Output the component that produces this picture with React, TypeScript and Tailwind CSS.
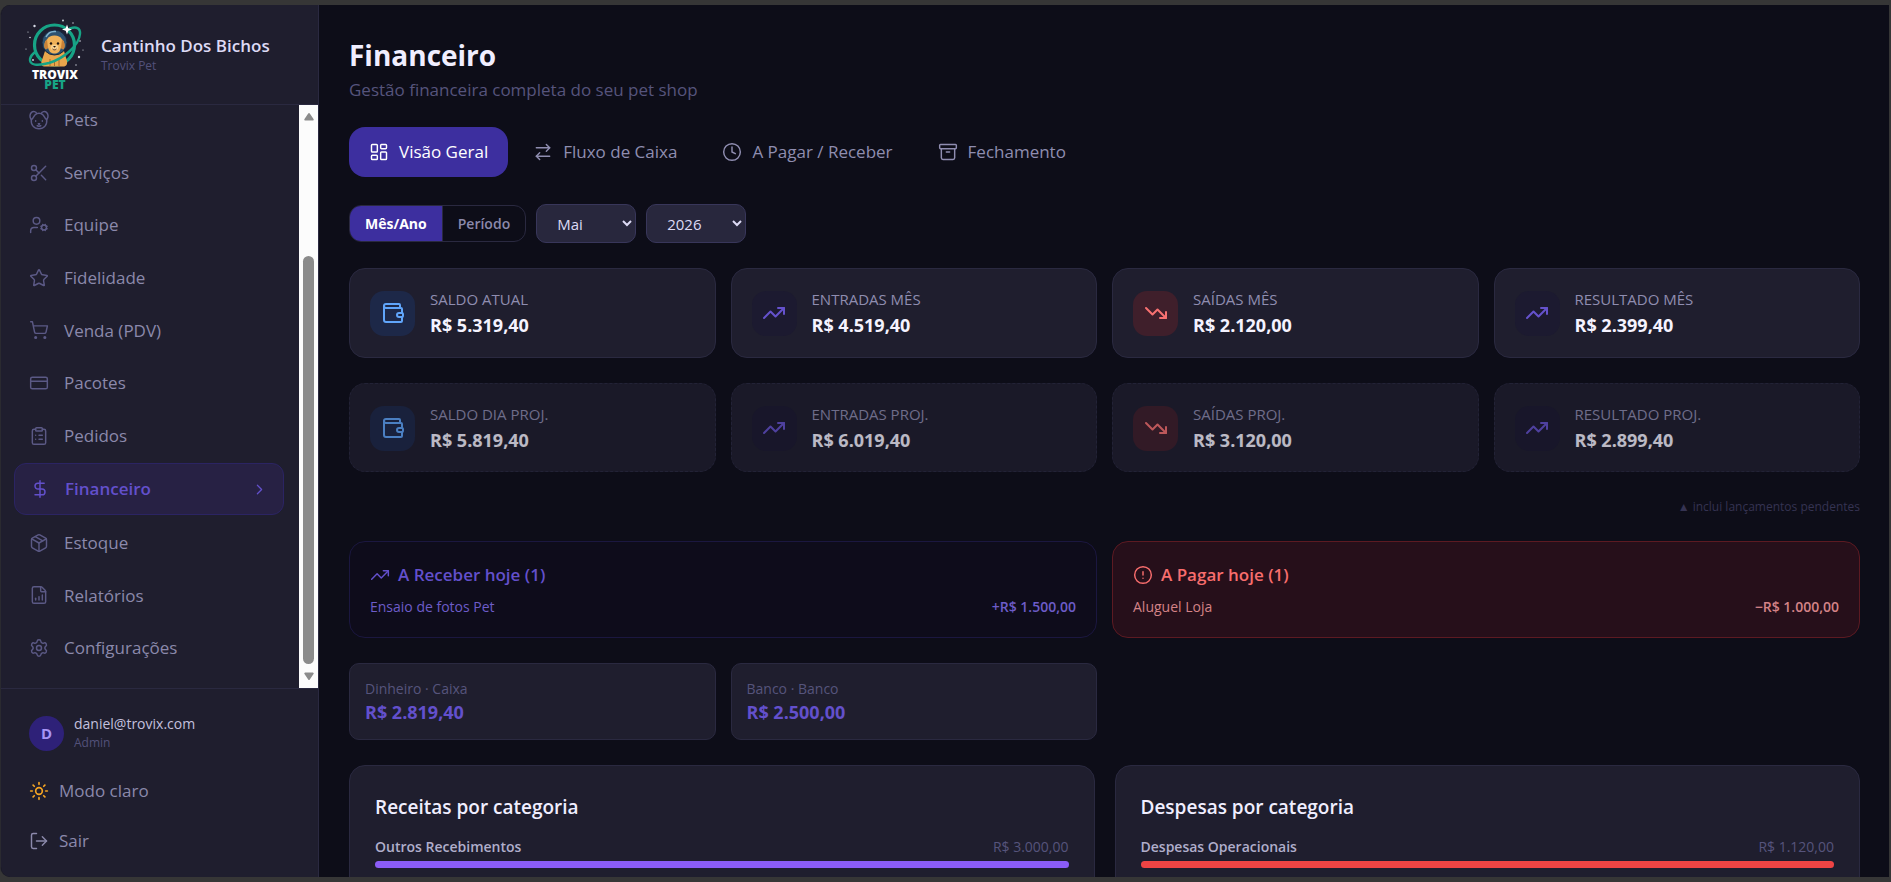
import React, { useState } from 'react';
import {
  Archive,
  ArrowRightLeft,
  ChevronRight,
  CircleAlert,
  ClipboardList,
  Clock,
  CreditCard,
  DollarSign,
  FileChartColumnIncreasing,
  LayoutDashboard,
  LogOut,
  Package,
  Scissors,
  Settings,
  ShoppingCart,
  Star,
  Sun,
  TrendingDown,
  TrendingUp,
  UserCog,
  Wallet,
} from 'lucide-react';

type IconProps = {
  size?: number;
  strokeWidth?: number;
  className?: string;
};

const DogFace = ({ size = 24, strokeWidth = 2, className }: IconProps) => (
  <svg
    width={size}
    height={size}
    viewBox="0 0 24 24"
    fill="none"
    stroke="currentColor"
    strokeWidth={strokeWidth}
    strokeLinecap="round"
    strokeLinejoin="round"
    className={className}
  >
    <path d="M9.300 4.300C8.300 1.800 5 1 3 2.800.900 4.700.700 8.300 2 10.300c.5.9 1.500.9 2.200.2C5.300 9.200 6 6 9.300 4.300Z" />
    <path d="M14.700 4.300C15.700 1.800 19 1 21 2.800c2.100 1.900 2.300 5.500 1 7.500-.5.9-1.500.9-2.200.2C18.700 9.200 18 6 14.700 4.300Z" />
    <path d="M9.300 4.300c1.700-.5 3.700-.5 5.400 0" />
    <path d="M2.800 11C1.800 18 6 22.500 12 22.500S22.200 18 21.200 11" />
    <path d="M8 13v.6M16 13v.6M11.200 16.500h1.600l-.8.800z" />
    <path d="M9.800 18.800c.9.800 3.500.8 4.400 0" />
  </svg>
);

const TrovixLogo = () => (
  <svg width="60" height="76" viewBox="0 -2 60 76" role="img" aria-label="Trovix Pet">
    <g fill="#d7dbe6">
      <circle cx="9.500" cy="7" r="1.200" />
      <circle cx="5" cy="18.500" r="0.800" />
      <circle cx="38" cy="1.500" r="0.900" />
      <circle cx="48" cy="4" r="0.700" />
      <circle cx="3" cy="13" r="0.600" />
      <circle cx="1" cy="30" r="0.600" />
      <circle cx="55" cy="22" r="0.800" />
      <circle cx="54" cy="38" r="1.200" />
      <circle cx="8" cy="41" r="0.900" />
      <circle cx="51" cy="46" r="0.700" />
      <circle cx="58" cy="31" r="0.600" />
    </g>
    {/* Planet ring */}
    <circle cx="29.500" cy="26" r="20" fill="#1c1f31" stroke="#17a486" strokeWidth="3.200" />
    {/* Puppy body */}
    <path d="M20 32h19l3 10c.5 4-1 5.500-4 5.500H20c-3 0-4-1-3.500-5z" fill="#e9a64c" />
    <path d="M25 40v7M34 40v7M29.500 42v5" stroke="#a9692a" strokeWidth="1" />
    {/* Helmet */}
    <circle cx="29.500" cy="23.500" r="12.500" fill="#2d5270" stroke="#16263c" strokeWidth="1" />
    <path d="M21 18c2-4.500 6-6 10-5.500" fill="none" stroke="#7fb3cf" strokeWidth="1.500" />
    {/* Head */}
    <path d="M22 20.500c1.500-3 4-4 7.500-4s6 1 7.500 4c2.500 1 3.500 8 1.500 9.500-1 .8-2-.5-2.500-1.500-1 4.500-3.500 6-6.500 6s-5.500-1.500-6.500-6c-.5 1-1.500 2.300-2.500 1.500-2-1.500-1-8.500 1.500-9.500z" fill="#efb158" />
    <path d="M22 20.500c-2.500 1-3.500 8-1.500 9.500 1 .8 2-.5 2.500-1.500zM37 20.500c2.500 1 3.500 8 1.500 9.500-1 .8-2-.5-2.500-1.500z" fill="#c98237" />
    <circle cx="26" cy="24.500" r="1.200" fill="#1d1410" />
    <circle cx="33" cy="24.500" r="1.200" fill="#1d1410" />
    <ellipse cx="29.500" cy="28.500" rx="3.800" ry="3" fill="#f8d08c" />
    <path d="M28 27h3l-1.500 1.700z" fill="#1d1410" />
    <path d="M27.500 30c1.200 1.200 2.800 1.200 4 0" fill="none" stroke="#5a2c18" strokeWidth="1" />
    {/* Orbit */}
    <path d="M45 9.500C51 7.500 55.500 8.500 55 15 54 26 40 39 24 44 13 47 4 46.500 5 40 5.500 37 7.500 35 10 33" fill="none" stroke="#17a486" strokeWidth="2.400" strokeLinecap="round" />
    <path d="M42 5.500l1.300 3.700 3.700 1.300-3.700 1.300L42 15.500l-1.300-3.700-3.700-1.300 3.700-1.300z" fill="#fff" />
    <text textAnchor="middle" fontFamily="Open Sans, sans-serif" fontWeight="800" fontSize="12">
      <tspan x="30" y="60" fill="#fff">TROVIX</tspan>
      <tspan x="30" y="70" fill="#17a486">PET</tspan>
    </text>
  </svg>
);

const navItems = [
  { label: 'Pets', icon: DogFace },
  { label: 'Serviços', icon: Scissors },
  { label: 'Equipe', icon: UserCog },
  { label: 'Fidelidade', icon: Star },
  { label: 'Venda (PDV)', icon: ShoppingCart },
  { label: 'Pacotes', icon: CreditCard },
  { label: 'Pedidos', icon: ClipboardList },
  { label: 'Financeiro', icon: DollarSign, active: true },
  { label: 'Estoque', icon: Package },
  { label: 'Relatórios', icon: FileChartColumnIncreasing },
  { label: 'Configurações', icon: Settings },
];

const tabs = [
  { label: 'Visão Geral', icon: LayoutDashboard },
  { label: 'Fluxo de Caixa', icon: ArrowRightLeft },
  { label: 'A Pagar / Receber', icon: Clock },
  { label: 'Fechamento', icon: Archive },
];

const tones = {
  blue: 'bg-[#1d2848] text-[#60a5fa]',
  purple: 'bg-[#1c1a30] text-[#6552cc]',
  red: 'bg-[#3f1f2b] text-[#f87171]',
};

type Kpi = {
  label: string;
  value: string;
  icon: React.ElementType;
  tone: keyof typeof tones;
};

const current: Kpi[] = [
  { label: 'Saldo atual', value: 'R$ 5.319,40', icon: Wallet, tone: 'blue' },
  { label: 'Entradas mês', value: 'R$ 4.519,40', icon: TrendingUp, tone: 'purple' },
  { label: 'Saídas mês', value: 'R$ 2.120,00', icon: TrendingDown, tone: 'red' },
  { label: 'Resultado mês', value: 'R$ 2.399,40', icon: TrendingUp, tone: 'purple' },
];

const projected: Kpi[] = [
  { label: 'Saldo dia proj.', value: 'R$ 5.819,40', icon: Wallet, tone: 'blue' },
  { label: 'Entradas proj.', value: 'R$ 6.019,40', icon: TrendingUp, tone: 'purple' },
  { label: 'Saídas proj.', value: 'R$ 3.120,00', icon: TrendingDown, tone: 'red' },
  { label: 'Resultado proj.', value: 'R$ 2.899,40', icon: TrendingUp, tone: 'purple' },
];

const accounts = [
  { label: 'Dinheiro · Caixa', value: 'R$ 2.819,40' },
  { label: 'Banco · Banco', value: 'R$ 2.500,00' },
];

const categories = [
  { title: 'Receitas por categoria', name: 'Outros Recebimentos', value: 'R$ 3.000,00', percent: 100, bar: 'bg-[#8b5cf6]' },
  { title: 'Despesas por categoria', name: 'Despesas Operacionais', value: 'R$ 1.120,00', percent: 100, bar: 'bg-[#ef4444]' },
];

const KpiCard = ({ label, value, icon: Icon, tone, dashed }: Kpi & { dashed?: boolean }) => (
  <div
    className={`flex items-center gap-[15px] rounded-2xl border border-[#2a2940] bg-[#1f1e2e] px-5 ${
      dashed ? 'border-dashed pt-5 pb-[19px] opacity-75' : 'py-5'
    }`}
  >
    <div className={`flex size-[45px] shrink-0 items-center justify-center rounded-[14px] ${tones[tone]}`}>
      <Icon size={24} strokeWidth={2} />
    </div>
    <div>
      <p className="text-[15px] leading-5 text-[#8f8db0] uppercase">{label}</p>
      <p className="mt-1 text-lg leading-6 font-bold text-[#f5f3ff]">{value}</p>
    </div>
  </div>
);

const Sidebar = () => (
  <aside className="flex w-[318px] shrink-0 flex-col border-r border-[#2a2940] bg-[#1f1e2e]">
    <div className="flex h-[100px] shrink-0 items-center gap-4 border-b border-[#2a2940] px-6">
      <TrovixLogo />
      <div>
        <p className="text-[17px] leading-[22px] font-semibold text-[#dddaf5]">Cantinho Dos Bichos</p>
        <p className="text-xs leading-[18px] text-[#53517a]">Trovix Pet</p>
      </div>
    </div>

    <div className="flex min-h-0 flex-1">
      <nav className="flex-1 overflow-hidden">
        <ul className="-mt-[10px] flex h-full flex-col justify-between pr-[15px] pb-[5px] pl-[13px]">
          {navItems.map(({ label, icon: Icon, active }) => (
            <li key={label}>
              <a
                href="#"
                className={
                  active
                    ? 'flex h-[52px] items-center gap-[15px] rounded-xl border border-[#2b2463] bg-[#272144] px-[15px] text-[17px] font-semibold text-[#6350cc]'
                    : 'flex h-[50px] items-center gap-[15px] px-[15px] text-[17px] text-[#8b89ab]'
                }
              >
                <Icon size={20} strokeWidth={1.75} className={active ? '' : 'text-[#5b5985]'} />
                {label}
                {active && <ChevronRight size={17} strokeWidth={1.75} className="ml-auto" />}
              </a>
            </li>
          ))}
        </ul>
      </nav>

      {/* Scrollbar */}
      <div className="flex w-[19px] flex-col items-center justify-between bg-[#fcfcfc] py-2" aria-hidden="true">
        <svg width="10" height="8" viewBox="0 0 10 8" fill="#8b8b8b">
          <path d="M4.200.6a1 1 0 0 1 1.600 0l3.700 5.400A1 1 0 0 1 8.700 7.600H1.300A1 1 0 0 1 .5 6z" />
        </svg>
        <div className="mt-auto mb-2 h-[72%] w-[11px] rounded-full bg-[#8b8b8b]" />
        <svg width="10" height="8" viewBox="0 0 10 8" fill="#8b8b8b">
          <path d="M4.200 7.400a1 1 0 0 0 1.600 0L9.500 2A1 1 0 0 0 8.700.4H1.300A1 1 0 0 0 .5 2z" />
        </svg>
      </div>
    </div>

    <div className="shrink-0 border-t border-[#2a2940] px-7 pt-[25px] pb-[11px]">
      <div className="flex items-center gap-[10px] pb-[14px]">
        <div className="flex size-[35px] items-center justify-center rounded-full bg-[#2e2178] text-[15px] font-bold text-[#a794f5]">
          D
        </div>
        <div>
          <p className="text-sm leading-5 text-[#c3c0de]">daniel@trovix.com</p>
          <p className="text-xs leading-[18px] text-[#53517a]">Admin</p>
        </div>
      </div>
      <button type="button" className="flex h-[50px] w-full items-center gap-[10px] text-[17px] text-[#8b89ab]">
        <Sun size={20} strokeWidth={2} className="text-[#f5a524]" />
        Modo claro
      </button>
      <button type="button" className="flex h-[50px] w-full items-center gap-[10px] text-[17px] text-[#8b89ab]">
        <LogOut size={20} strokeWidth={1.75} />
        Sair
      </button>
    </div>
  </aside>
);

const selectClass =
  'h-[39px] w-[100px] rounded-[10px] border border-[#38365a] bg-[#28273d] pl-4 text-[15px] text-[#dddaf5]';

export default function App() {
  const [tab, setTab] = useState('Visão Geral');
  const [month, setMonth] = useState('Mai');
  const [year, setYear] = useState('2026');

  return (
    <div className="h-screen bg-[#363636] py-[5px] pr-[2px] font-['Open_Sans','Noto_Sans',sans-serif]">
      <div className="flex h-full overflow-hidden rounded-l-[10px] border-l border-[#2a2a30] bg-[#0d0d18]">
        <Sidebar />

        <main className="min-w-0 flex-1 overflow-hidden pt-[30px] pr-[29px] pl-[30px]">
          <h1 className="text-[28px] leading-10 font-bold text-[#f0eeff]">Financeiro</h1>
          <p className="text-[17px] leading-[30px] text-[#56547c]">Gestão financeira completa do seu pet shop</p>

          <div className="mt-[22px] flex gap-[5px]">
            {tabs.map(({ label, icon: Icon }) => (
              <button
                key={label}
                type="button"
                onClick={() => setTab(label)}
                className={`flex h-[50px] items-center gap-[10px] rounded-2xl px-5 text-[17px] font-medium ${
                  tab === label ? 'bg-[#3d2f9f] text-white' : 'text-[#8f8db0]'
                }`}
              >
                <Icon size={20} strokeWidth={1.75} />
                {label}
              </button>
            ))}
          </div>

          <div className="mt-[27px] flex items-center gap-[10px]">
            <div className="flex h-[37px] overflow-hidden rounded-xl border border-[#2a2940] text-sm">
              <button type="button" className="bg-[#3d2f9f] px-[15px] font-bold text-white">
                Mês/Ano
              </button>
              <button type="button" className="border-l border-[#2a2940] px-[15px] font-semibold text-[#8b89ab]">
                Período
              </button>
            </div>
            <select aria-label="Mês" value={month} onChange={(e) => setMonth(e.target.value)} className={selectClass}>
              {['Jan', 'Fev', 'Mar', 'Abr', 'Mai', 'Jun', 'Jul', 'Ago', 'Set', 'Out', 'Nov', 'Dez'].map((m) => (
                <option key={m}>{m}</option>
              ))}
            </select>
            <select aria-label="Ano" value={year} onChange={(e) => setYear(e.target.value)} className={selectClass}>
              {['2024', '2025', '2026'].map((y) => (
                <option key={y}>{y}</option>
              ))}
            </select>
          </div>

          <div className="mt-[25px] grid grid-cols-4 gap-[15px]">
            {current.map((kpi) => (
              <KpiCard key={kpi.label} {...kpi} />
            ))}
          </div>
          <div className="mt-[25px] grid grid-cols-4 gap-[15px]">
            {projected.map((kpi) => (
              <KpiCard key={kpi.label} {...kpi} dashed />
            ))}
          </div>
          <p className="mt-[25px] text-right text-xs leading-5 text-[#353352]">▲ inclui lançamentos pendentes</p>

          {/* Due today */}
          <div className="mt-6 grid grid-cols-2 gap-[15px]">
            <section className="rounded-2xl border border-[#1b1740] bg-[#0e0c1b] px-5 pt-[19px] pb-[18px]">
              <h2 className="flex items-center gap-2 text-[17px] leading-7 font-semibold text-[#6350cc]">
                <TrendingUp size={20} strokeWidth={1.75} />
                A Receber hoje (1)
              </h2>
              <div className="mt-[6px] flex justify-between text-sm leading-6 text-[#6d5cc8]">
                <span>Ensaio de fotos Pet</span>
                <span className="font-semibold">+R$ 1.500,00</span>
              </div>
            </section>
            <section className="rounded-2xl border border-[#5c1a22] bg-[#260f1a] px-5 pt-[19px] pb-[18px]">
              <h2 className="flex items-center gap-2 text-[17px] leading-7 font-semibold text-[#f86d6d]">
                <CircleAlert size={20} strokeWidth={1.75} />
                A Pagar hoje (1)
              </h2>
              <div className="mt-[6px] flex justify-between text-sm leading-6 text-[#d48387]">
                <span>Aluguel Loja</span>
                <span className="font-semibold">−R$ 1.000,00</span>
              </div>
            </section>
          </div>

          <div className="mt-[25px] grid grid-cols-4 gap-[15px]">
            {accounts.map(({ label, value }) => (
              <div key={label} className="rounded-[10px] border border-[#2a2940] bg-[#1f1e2e] px-[15px] py-[14px]">
                <p className="text-sm leading-[22px] text-[#56547c]">{label}</p>
                <p className="text-lg leading-[25px] font-bold text-[#6350cc]">{value}</p>
              </div>
            ))}
          </div>

          <div className="mt-[25px] grid grid-cols-2 gap-5">
            {categories.map(({ title, name, value, percent, bar }) => (
              <section key={title} className="rounded-2xl border border-[#2a2940] bg-[#1f1e2e] p-[25px]">
                <h2 className="text-[19px] leading-8 font-semibold text-[#f0eeff]">{title}</h2>
                <div className="mt-3 flex justify-between text-sm leading-6">
                  <span className="font-semibold text-[#b0aecb]">{name}</span>
                  <span className="text-[#56547c]">{value}</span>
                </div>
                <div className="mt-[2px] h-[7px] rounded-full bg-[#2a2940]">
                  <div className={`h-full rounded-full ${bar}`} style={{ width: `${percent}%` }} />
                </div>
              </section>
            ))}
          </div>
        </main>
      </div>
    </div>
  );
}
